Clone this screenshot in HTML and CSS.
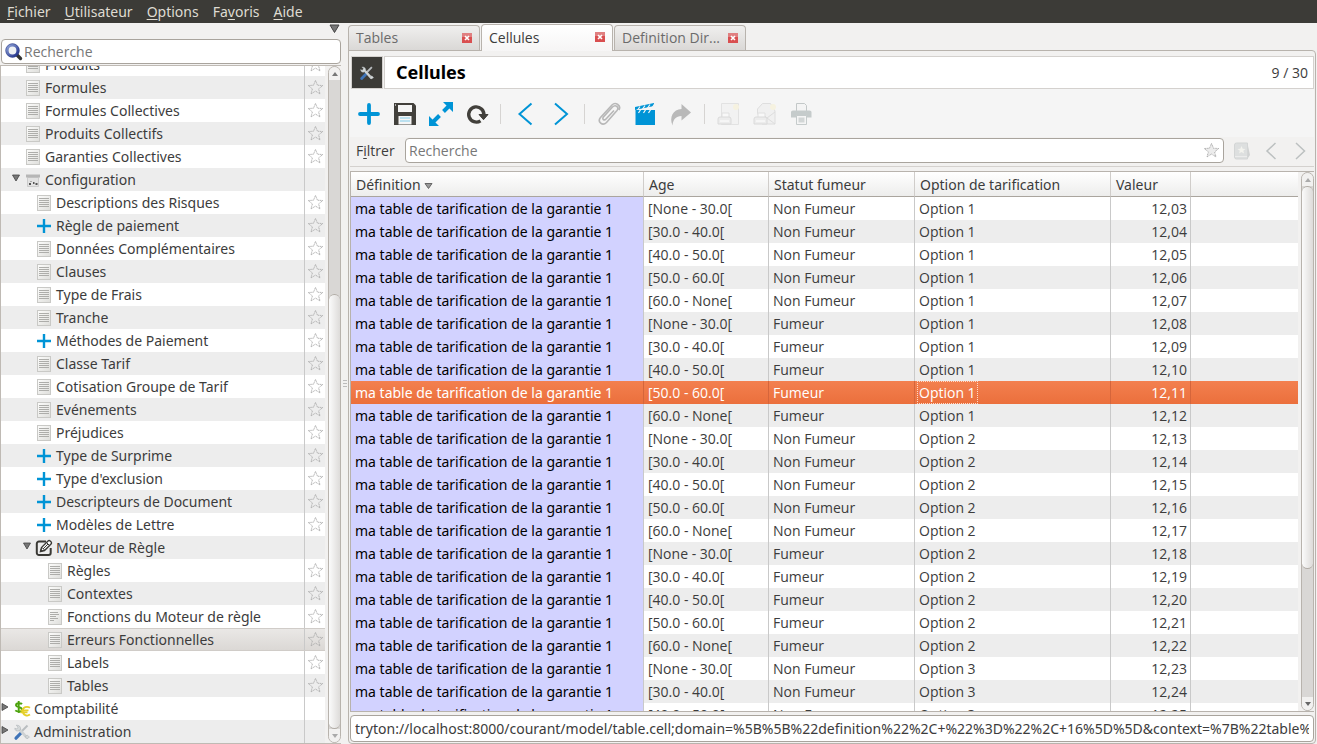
FILE: index.html
```html
<!DOCTYPE html>
<html lang="fr">
<head>
<meta charset="utf-8">
<title>Cellules</title>
<link rel="stylesheet" href="styles.css">
</head>
<body>
<svg class="defs" aria-hidden="true">
  <defs>
    <linearGradient id="paper" x1="0" y1="0" x2="1" y2="1"><stop offset="0" stop-color="#fdfdfc"/><stop offset="1" stop-color="#dededb"/></linearGradient>
    <linearGradient id="lens" x1="0" y1="0" x2="1" y2="1"><stop offset="0" stop-color="#8fa3d8"/><stop offset="1" stop-color="#1f2f8a"/></linearGradient>
    <symbol id="doc" viewBox="0 0 18 18"><rect x="2.500" y="1.500" width="13" height="15" fill="url(#paper)" stroke="#c9c9c6"/><path d="M4 4.500h10M4 6.500h10M4 8.500h10M4 10.500h10M4 12.500h10" stroke="#adadaa"/></symbol>
    <symbol id="doc-left" viewBox="0 0 18 18"><rect x="2.500" y="1.500" width="13" height="15" fill="url(#paper)" stroke="#c9c9c6"/><path d="M4 4.500h8M4 6.500h9M4 8.500h6M4 10.500h8M4 12.500h4" stroke="#adadaa"/></symbol>
    <symbol id="plus" viewBox="0 0 18 18"><path d="M9 2v14M2 9h14" stroke="#0094d6" stroke-width="2.400"/></symbol>
    <symbol id="box" viewBox="0 0 18 18"><path d="M3.500 6.500h11v9h-11z" fill="#e2e2e2" stroke="#ccc"/><path d="M2 3h14v3.500H2z" fill="#b6b6b6"/><path d="M2 3h14v1H2z" fill="#d2d2d2"/><path d="M5 12h2v2H5zM9 11h1.500v2H9zM11.500 12h2v2h-2z" fill="#555"/><path d="M6 10h2v1H6z" fill="#aaa"/></symbol>
    <symbol id="edit" viewBox="0 0 18 18"><path d="M11 2.500H4A2.200 2.200 0 0 0 1.800 4.700v9A2.200 2.200 0 0 0 4 16h9.500a2.200 2.200 0 0 0 2.200-2.200V9" fill="none" stroke="#3a3935" stroke-width="2"/><path d="M5.500 12.500l1-4 6.500-6.500a1.500 1.500 0 0 1 2.200 0l.8.8a1.500 1.500 0 0 1 0 2.200L9.500 11.500z" fill="#fff" stroke="#3a3935" stroke-width="1.400"/><path d="M7 8.500l2.500 2.500M11.500 3.500l3 3M8 10l5-5M5.500 12.500l.5-2 1.500 1.500z" stroke="#3a3935" fill="#3a3935"/></symbol>
    <symbol id="money" viewBox="0 0 18 18"><path d="M9 4.200C8 3 3 2.600 3 5.200c0 2.300 6 1.400 6 4.200 0 3-5 2.600-6.700 1M5.700 1v12" fill="none" stroke="#4ca30d" stroke-width="1.900"/><path d="M17 7.800c-3-2-7.300-.7-7.300 3.200 0 4.200 4.500 5.600 7.300 3.600M7.500 10.300h8M7.500 12.300h7" fill="none" stroke="#e5cf28" stroke-width="1.800"/></symbol>
    <symbol id="tools" viewBox="0 0 18 18"><path d="M14.500 2.500L8 9" stroke="#b9bdc0" stroke-width="2"/><path d="M8.500 9.500l-5.500 5.700" stroke="#3f74b8" stroke-width="3.200" stroke-linecap="round"/><path d="M6 6l7.800 8.500" stroke="#ced2d3" stroke-width="2.600" stroke-linecap="round"/><path d="M3.200 2.200L5 4.200 3.800 6 1.800 5.200c0 2.400 2 3.400 4 2.600L7.500 6.500C8 3.500 6 1.800 3.200 2.200zM12 13.500l2 2.200 2.500-1.500-2-2z" fill="#d5d9da" stroke="#a5aaae" stroke-width=".5"/></symbol>
    <symbol id="star" viewBox="0 0 18 18"><path d="M9 1.500l2.100 5.100 5.600.3-4.400 3.600 1.500 5.300L9 12.800l-4.800 3 1.500-5.300L1.300 6.900l5.600-.3z" fill="none" stroke="#aaa" stroke-width=".9" stroke-dasharray="1.500 .5"/></symbol>
    <symbol id="star-hatched" viewBox="0 0 18 18"><path d="M9 1.500l2.100 5.100 5.600.3-4.400 3.600 1.500 5.300L9 12.800l-4.800 3 1.500-5.300L1.300 6.900l5.600-.3z" fill="#ececec" stroke="#999" stroke-width=".9" stroke-dasharray="1 .7"/></symbol>
    <symbol id="down" viewBox="0 0 8 8"><path d="M.5 1h7L4 7z" fill="#777" stroke="#444" stroke-width=".8"/></symbol>
    <symbol id="right" viewBox="0 0 8 8"><path d="M1 .5v7L7 4z" fill="#777" stroke="#444" stroke-width=".8"/></symbol>
    <symbol id="close" viewBox="0 0 10 10"><path d="M0 0h10v10H0z" fill="#d94f50"/><path d="M0 0h10v4H0z" fill="#e07f80"/><path d="M3 3l4 4M7 3L3 7" stroke="#fff" stroke-width="1.600"/></symbol>
  </defs>
</svg>

<nav class="menubar">
  <button><u>F</u>ichier</button><button><u>U</u>tilisateur</button><button><u>O</u>ptions</button><button>Fa<u>v</u>oris</button><button><u>A</u>ide</button>
</nav>

<div class="workspace">
  <aside class="sidebar">
    <button class="collapse" aria-label="Réduire le menu"><svg width="11" height="9" viewBox="0 0 11 9"><path d="M1 1h9L5.500 8.500z" fill="#777" stroke="#444"/></svg></button>
    <div class="search">
      <svg width="18" height="18" viewBox="0 0 18 18"><path d="M12 12l3.500 3.500" stroke="#333" stroke-width="3.400" stroke-linecap="round"/><circle cx="7.500" cy="7.500" r="5.400" fill="#eef1f4" stroke="url(#lens)" stroke-width="3"/><circle cx="7.500" cy="7.500" r="6.800" fill="none" stroke="#2b3a86" stroke-width=".6"/></svg>
      <input type="text" placeholder="Recherche" aria-label="Recherche dans le menu">
    </div>
    <div class="tree-frame">
      <ul class="tree">
        <li class="l1"><span class="toggle"></span><svg class="ico"><use href="#doc"/></svg><a href="#">Produits</a><button class="fav" aria-label="Favori"><svg><use href="#star"/></svg></button></li>
        <li class="l1"><span class="toggle"></span><svg class="ico"><use href="#doc"/></svg><a href="#">Formules</a><button class="fav" aria-label="Favori"><svg><use href="#star"/></svg></button></li>
        <li class="l1"><span class="toggle"></span><svg class="ico"><use href="#doc"/></svg><a href="#">Formules Collectives</a><button class="fav" aria-label="Favori"><svg><use href="#star"/></svg></button></li>
        <li class="l1"><span class="toggle"></span><svg class="ico"><use href="#doc"/></svg><a href="#">Produits Collectifs</a><button class="fav" aria-label="Favori"><svg><use href="#star"/></svg></button></li>
        <li class="l1"><span class="toggle"></span><svg class="ico"><use href="#doc"/></svg><a href="#">Garanties Collectives</a><button class="fav" aria-label="Favori"><svg><use href="#star"/></svg></button></li>
        <li class="l1"><button class="toggle" aria-label="Replier"><svg><use href="#down"/></svg></button><svg class="ico"><use href="#box"/></svg><a href="#">Configuration</a><span class="fav"></span></li>
        <li class="l2"><span class="toggle"></span><svg class="ico"><use href="#doc"/></svg><a href="#">Descriptions des Risques</a><button class="fav" aria-label="Favori"><svg><use href="#star"/></svg></button></li>
        <li class="l2"><span class="toggle"></span><svg class="ico"><use href="#plus"/></svg><a href="#">Règle de paiement</a><button class="fav" aria-label="Favori"><svg><use href="#star"/></svg></button></li>
        <li class="l2"><span class="toggle"></span><svg class="ico"><use href="#doc"/></svg><a href="#">Données Complémentaires</a><button class="fav" aria-label="Favori"><svg><use href="#star"/></svg></button></li>
        <li class="l2"><span class="toggle"></span><svg class="ico"><use href="#doc"/></svg><a href="#">Clauses</a><button class="fav" aria-label="Favori"><svg><use href="#star"/></svg></button></li>
        <li class="l2"><span class="toggle"></span><svg class="ico"><use href="#doc"/></svg><a href="#">Type de Frais</a><button class="fav" aria-label="Favori"><svg><use href="#star"/></svg></button></li>
        <li class="l2"><span class="toggle"></span><svg class="ico"><use href="#doc"/></svg><a href="#">Tranche</a><button class="fav" aria-label="Favori"><svg><use href="#star"/></svg></button></li>
        <li class="l2"><span class="toggle"></span><svg class="ico"><use href="#plus"/></svg><a href="#">Méthodes de Paiement</a><button class="fav" aria-label="Favori"><svg><use href="#star"/></svg></button></li>
        <li class="l2"><span class="toggle"></span><svg class="ico"><use href="#doc"/></svg><a href="#">Classe Tarif</a><button class="fav" aria-label="Favori"><svg><use href="#star"/></svg></button></li>
        <li class="l2"><span class="toggle"></span><svg class="ico"><use href="#doc"/></svg><a href="#">Cotisation Groupe de Tarif</a><button class="fav" aria-label="Favori"><svg><use href="#star"/></svg></button></li>
        <li class="l2"><span class="toggle"></span><svg class="ico"><use href="#doc"/></svg><a href="#">Evénements</a><button class="fav" aria-label="Favori"><svg><use href="#star"/></svg></button></li>
        <li class="l2"><span class="toggle"></span><svg class="ico"><use href="#doc"/></svg><a href="#">Préjudices</a><button class="fav" aria-label="Favori"><svg><use href="#star"/></svg></button></li>
        <li class="l2"><span class="toggle"></span><svg class="ico"><use href="#plus"/></svg><a href="#">Type de Surprime</a><button class="fav" aria-label="Favori"><svg><use href="#star"/></svg></button></li>
        <li class="l2"><span class="toggle"></span><svg class="ico"><use href="#plus"/></svg><a href="#">Type d'exclusion</a><button class="fav" aria-label="Favori"><svg><use href="#star"/></svg></button></li>
        <li class="l2"><span class="toggle"></span><svg class="ico"><use href="#plus"/></svg><a href="#">Descripteurs de Document</a><button class="fav" aria-label="Favori"><svg><use href="#star"/></svg></button></li>
        <li class="l2"><span class="toggle"></span><svg class="ico"><use href="#plus"/></svg><a href="#">Modèles de Lettre</a><button class="fav" aria-label="Favori"><svg><use href="#star"/></svg></button></li>
        <li class="l2"><button class="toggle" aria-label="Replier"><svg><use href="#down"/></svg></button><svg class="ico"><use href="#edit"/></svg><a href="#">Moteur de Règle</a><span class="fav"></span></li>
        <li class="l3"><span class="toggle"></span><svg class="ico"><use href="#doc"/></svg><a href="#">Règles</a><button class="fav" aria-label="Favori"><svg><use href="#star"/></svg></button></li>
        <li class="l3"><span class="toggle"></span><svg class="ico"><use href="#doc"/></svg><a href="#">Contextes</a><button class="fav" aria-label="Favori"><svg><use href="#star"/></svg></button></li>
        <li class="l3"><span class="toggle"></span><svg class="ico"><use href="#doc-left"/></svg><a href="#">Fonctions du Moteur de règle</a><button class="fav" aria-label="Favori"><svg><use href="#star"/></svg></button></li>
        <li class="l3 current"><span class="toggle"></span><svg class="ico"><use href="#doc"/></svg><a href="#">Erreurs Fonctionnelles</a><button class="fav" aria-label="Favori"><svg><use href="#star"/></svg></button></li>
        <li class="l3"><span class="toggle"></span><svg class="ico"><use href="#doc"/></svg><a href="#">Labels</a><button class="fav" aria-label="Favori"><svg><use href="#star"/></svg></button></li>
        <li class="l3"><span class="toggle"></span><svg class="ico"><use href="#doc"/></svg><a href="#">Tables</a><button class="fav" aria-label="Favori"><svg><use href="#star"/></svg></button></li>
        <li class="l0"><button class="toggle" aria-label="Déplier"><svg><use href="#right"/></svg></button><svg class="ico"><use href="#money"/></svg><a href="#">Comptabilité</a><span class="fav"></span></li>
        <li class="l0"><button class="toggle" aria-label="Déplier"><svg><use href="#right"/></svg></button><svg class="ico"><use href="#tools"/></svg><a href="#">Administration</a><span class="fav"></span></li>
      </ul>
      <div class="scrollbar menu-scroll">
        <button aria-label="Défiler vers le haut"><svg width="6" height="4" viewBox="0 0 6 4"><path d="M0 4h6L3 0z" fill="#777"/></svg></button>
        <div class="track"><div class="thumb"></div></div>
        <button aria-label="Défiler vers le bas"><svg width="6" height="4" viewBox="0 0 6 4"><path d="M0 0h6L3 4z" fill="#aaa"/></svg></button>
      </div>
    </div>
  </aside>

  <div class="splitter"><span></span></div>

  <main class="main">
    <div class="tabs">
      <div class="tab"><button class="name">Tables</button><button class="x" aria-label="Fermer Tables"><svg><use href="#close"/></svg></button></div>
      <div class="tab active"><button class="name">Cellules</button><button class="x" aria-label="Fermer Cellules"><svg><use href="#close"/></svg></button></div>
      <div class="tab"><button class="name">Definition Dir...</button><button class="x" aria-label="Fermer Definition"><svg><use href="#close"/></svg></button></div>
    </div>
    <section class="page">
      <header class="title">
        <button class="title-menu" aria-label="Outils"><svg width="16" height="16"><use href="#tools"/></svg></button>
        <div class="title-box"><h1>Cellules</h1><span>9 / 30</span></div>
      </header>
      <div class="toolbar">
        <button aria-label="Nouveau"><svg viewBox="0 0 24 24"><path d="M12 3v18M3 12h18" stroke="#0094d6" stroke-width="3.800" stroke-linecap="round"/></svg></button>
        <button aria-label="Enregistrer"><svg viewBox="0 0 24 24"><path d="M1 1h19.500L23 3.500V23H1z" fill="#42403b"/><path d="M5 3h14v7H5zM5.500 14h13v8.500h-13z" fill="#f5f5f5"/><path d="M7 16h10M7 19h10" stroke="#82cbea" stroke-width="1.200"/><path d="M2.500 2v2" stroke="#aaa"/></svg></button>
        <button aria-label="Basculer la vue"><svg viewBox="0 0 24 24"><path d="M14 0h10v10zM0 14v10h10z" fill="#0094d6"/><path d="M21 3l-6.500 6.500M10.500 13.500L3 21" stroke="#0094d6" stroke-width="4"/></svg></button>
        <button aria-label="Recharger"><svg viewBox="0 0 24 24"><path d="M15.500 18.800A7.600 7.600 0 1 1 18.900 13" fill="none" stroke="#42403b" stroke-width="3.400"/><path d="M14 12.500h9l-4.500 5.200z" fill="#42403b" stroke="#42403b"/></svg></button>
        <i></i>
        <button aria-label="Précédent"><svg viewBox="0 0 24 24"><path d="M18.500 1.500L6.500 12l12 10.500" fill="none" stroke="#0094d6" stroke-width="2"/></svg></button>
        <button aria-label="Suivant"><svg viewBox="0 0 24 24"><path d="M6 1.500L18 12 6 22.500" fill="none" stroke="#0094d6" stroke-width="2"/></svg></button>
        <i></i>
        <button aria-label="Pièce jointe"><svg viewBox="0 0 24 24"><path d="M17 8.500l-8 8.500c-1.800 2-4.300 0-2.600-2L15.500 5c3-3 7 .3 4.500 3.500L9.500 20.500c-4 4-9.500-.5-6-5L15 3c3.500-3.500 9.500.5 7 5" fill="none" stroke="#b7b7b7" stroke-width="1.600"/></svg></button>
        <button aria-label="Actions"><svg viewBox="0 0 24 24"><path d="M2.500 10h19.500v13H2.500z" fill="#0094d6"/><path d="M2 5l19-4v3L2 8z" fill="#0094d6"/><path d="M4 9l3-4.500M9 8l3-4.500M14 7l3-4.500M19 6l2.500-4" stroke="#f5f5f5" stroke-width="1.200"/><path d="M2.500 8h19.500v2H2.500z" fill="#0094d6"/><path d="M5.500 11l2.500-4M10.500 11l2.500-4M15.500 11l2.500-4" stroke="#f5f5f5" stroke-width="1.200"/></svg></button>
        <button aria-label="Relations"><svg viewBox="0 0 24 24"><path d="M12.500 2l9.500 8.500-9.500 8v-4.500C7 14 4 17.500 3.500 23.500 0 15 4 7.500 12.500 7z" fill="#b9b9b9"/></svg></button>
        <i></i>
        <button aria-label="Rapport"><svg viewBox="0 0 24 24"><path d="M4.500 1.500h17v21h-17z" fill="#f2f2f2" stroke="#e2e2e2"/><path d="M5 11h7v5H5z" fill="#f8f8f8" stroke="#e0e0e0"/><path d="M1 17q0-2 2-2h9q2 0 2 2v5H1z" fill="#ececec" stroke="#dadada"/><path d="M3 19h9" stroke="#fff"/><circle cx="19" cy="5" r="3" fill="#f6f2e0"/></svg></button>
        <button aria-label="Courriel"><svg viewBox="0 0 24 24"><path d="M4.500 11V7l5-5.500h8L22 9v13H9z" fill="#f0f0f0" stroke="#dedede"/><path d="M14 16l8 6M22 10l-8 6-5-5" fill="none" stroke="#ddd"/><path d="M5 11h7v5H5z" fill="#f8f8f8" stroke="#e0e0e0"/><path d="M1 17q0-2 2-2h9q2 0 2 2v5H1z" fill="#ececec" stroke="#dadada"/><path d="M3 19h9" stroke="#fff"/><circle cx="20" cy="5" r="3" fill="#f6f2e0"/></svg></button>
        <button aria-label="Imprimer"><svg viewBox="0 0 24 24"><path d="M7.500 9V1.500h8l2 2V9" fill="#f4f4f4" stroke="#c3c8c8"/><path d="M2 10q0-1.500 2-1.500h16.500q2 0 2 1.500v5.500H2z" fill="#c5cbcb"/><path d="M7.500 13.500h10v9h-10z" fill="#f5f5f5" stroke="#c5cbcb"/><path d="M9.500 15.500h6v5h-6z" fill="#d2d6d6"/></svg></button>
      </div>
      <div class="filter">
        <label for="filter">F<u>i</u>ltrer</label>
        <div class="filter-field"><input id="filter" type="text" placeholder="Recherche"><button aria-label="Favoris"><svg width="17" height="17"><use href="#star-hatched"/></svg></button></div>
        <button class="nav" aria-label="Marque-pages"><svg width="18" height="18" viewBox="0 0 18 18"><path d="M1.500 3q0-2 2-2h11v16h-11q-2 0-2-2z" fill="#dddfdf" stroke="#d3d5d5"/><path d="M15 4l2 9-2 3z" fill="#d0d2d2"/><path d="M2 14.500h12" stroke="#ececec"/><path d="M8.500 4l1.200 2.700 2.800.2-2.200 1.800.8 2.800-2.600-1.600-2.400 1.600.7-2.800L4.500 6.900l2.800-.2z" fill="#f3f3ee"/></svg></button>
        <button class="nav" aria-label="Page précédente"><svg width="18" height="18" viewBox="0 0 18 18"><path d="M13.500 1L5 9l8.500 8" fill="none" stroke="#bcc0c0" stroke-width="1.500"/></svg></button>
        <button class="nav" aria-label="Page suivante"><svg width="18" height="18" viewBox="0 0 18 18"><path d="M5 1l8.500 8L5 17" fill="none" stroke="#bcc0c0" stroke-width="1.500"/></svg></button>
      </div>
      <div class="grid-frame">
        <div class="grid-view">
          <table class="grid">
            <colgroup><col class="c-def"><col class="c-age"><col class="c-smoke"><col class="c-opt"><col class="c-val"><col></colgroup>
            <thead><tr><th>Définition <svg width="9" height="6" viewBox="0 0 9 6"><path d="M1 .5h7L4.500 5.500z" fill="#999" stroke="#666"/></svg></th><th>Age</th><th>Statut fumeur</th><th>Option de tarification</th><th>Valeur</th><th></th></tr></thead>
            <tbody>
              <tr><td>ma table de tarification de la garantie 1</td><td>[None - 30.0[</td><td>Non Fumeur</td><td>Option 1</td><td>12,03</td><td></td></tr>
              <tr><td>ma table de tarification de la garantie 1</td><td>[30.0 - 40.0[</td><td>Non Fumeur</td><td>Option 1</td><td>12,04</td><td></td></tr>
              <tr><td>ma table de tarification de la garantie 1</td><td>[40.0 - 50.0[</td><td>Non Fumeur</td><td>Option 1</td><td>12,05</td><td></td></tr>
              <tr><td>ma table de tarification de la garantie 1</td><td>[50.0 - 60.0[</td><td>Non Fumeur</td><td>Option 1</td><td>12,06</td><td></td></tr>
              <tr><td>ma table de tarification de la garantie 1</td><td>[60.0 - None[</td><td>Non Fumeur</td><td>Option 1</td><td>12,07</td><td></td></tr>
              <tr><td>ma table de tarification de la garantie 1</td><td>[None - 30.0[</td><td>Fumeur</td><td>Option 1</td><td>12,08</td><td></td></tr>
              <tr><td>ma table de tarification de la garantie 1</td><td>[30.0 - 40.0[</td><td>Fumeur</td><td>Option 1</td><td>12,09</td><td></td></tr>
              <tr><td>ma table de tarification de la garantie 1</td><td>[40.0 - 50.0[</td><td>Fumeur</td><td>Option 1</td><td>12,10</td><td></td></tr>
              <tr class="selected"><td>ma table de tarification de la garantie 1</td><td>[50.0 - 60.0[</td><td>Fumeur</td><td><span class="focus">Option 1</span></td><td>12,11</td><td></td></tr>
              <tr><td>ma table de tarification de la garantie 1</td><td>[60.0 - None[</td><td>Fumeur</td><td>Option 1</td><td>12,12</td><td></td></tr>
              <tr><td>ma table de tarification de la garantie 1</td><td>[None - 30.0[</td><td>Non Fumeur</td><td>Option 2</td><td>12,13</td><td></td></tr>
              <tr><td>ma table de tarification de la garantie 1</td><td>[30.0 - 40.0[</td><td>Non Fumeur</td><td>Option 2</td><td>12,14</td><td></td></tr>
              <tr><td>ma table de tarification de la garantie 1</td><td>[40.0 - 50.0[</td><td>Non Fumeur</td><td>Option 2</td><td>12,15</td><td></td></tr>
              <tr><td>ma table de tarification de la garantie 1</td><td>[50.0 - 60.0[</td><td>Non Fumeur</td><td>Option 2</td><td>12,16</td><td></td></tr>
              <tr><td>ma table de tarification de la garantie 1</td><td>[60.0 - None[</td><td>Non Fumeur</td><td>Option 2</td><td>12,17</td><td></td></tr>
              <tr><td>ma table de tarification de la garantie 1</td><td>[None - 30.0[</td><td>Fumeur</td><td>Option 2</td><td>12,18</td><td></td></tr>
              <tr><td>ma table de tarification de la garantie 1</td><td>[30.0 - 40.0[</td><td>Fumeur</td><td>Option 2</td><td>12,19</td><td></td></tr>
              <tr><td>ma table de tarification de la garantie 1</td><td>[40.0 - 50.0[</td><td>Fumeur</td><td>Option 2</td><td>12,20</td><td></td></tr>
              <tr><td>ma table de tarification de la garantie 1</td><td>[50.0 - 60.0[</td><td>Fumeur</td><td>Option 2</td><td>12,21</td><td></td></tr>
              <tr><td>ma table de tarification de la garantie 1</td><td>[60.0 - None[</td><td>Fumeur</td><td>Option 2</td><td>12,22</td><td></td></tr>
              <tr><td>ma table de tarification de la garantie 1</td><td>[None - 30.0[</td><td>Non Fumeur</td><td>Option 3</td><td>12,23</td><td></td></tr>
              <tr><td>ma table de tarification de la garantie 1</td><td>[30.0 - 40.0[</td><td>Non Fumeur</td><td>Option 3</td><td>12,24</td><td></td></tr>
              <tr><td>ma table de tarification de la garantie 1</td><td>[40.0 - 50.0[</td><td>Non Fumeur</td><td>Option 3</td><td>12,25</td><td></td></tr>
            </tbody>
          </table>
        </div>
        <div class="scrollbar grid-scroll">
          <button aria-label="Défiler vers le haut"><svg width="6" height="4" viewBox="0 0 6 4"><path d="M0 4h6L3 0z" fill="#aaa"/></svg></button>
          <div class="track"><div class="thumb"></div></div>
          <button aria-label="Défiler vers le bas"><svg width="6" height="4" viewBox="0 0 6 4"><path d="M0 0h6L3 4z" fill="#666"/></svg></button>
        </div>
      </div>
      <input class="url" type="text" readonly aria-label="Adresse" value="tryton://localhost:8000/courant/model/table.cell;domain=%5B%5B%22definition%22%2C+%22%3D%22%2C+16%5D%5D&amp;context=%7B%22table%22%3A+16%7D">
    </section>
  </main>
</div>
</body>
</html>
```

FILE: styles.css
```css
* { box-sizing: border-box; }
body {
  margin: 0;
  height: 100vh;
  display: flex;
  flex-direction: column;
  overflow: hidden;
  background: #f2f1f0;
  color: #3c3c3c;
  font: 14px/23px "Open Sans", "Noto Sans", sans-serif;
}
button {
  margin: 0;
  padding: 0;
  border: 0;
  background: none;
  color: inherit;
  font: inherit;
}
button svg { display: block; }
input { font: inherit; color: #3c3c3c; min-width: 0; }
input::placeholder { color: #777; opacity: 1; }
a { color: inherit; text-decoration: none; }
u { text-underline-offset: 2px; }
.defs { position: absolute; width: 0; height: 0; }
.menubar, .tree, .grid th, .url, .grid tbody td:first-child { font-family: "Noto Sans", "Open Sans", sans-serif; }

.menubar {
  flex: none;
  display: flex;
  gap: 14px;
  height: 23px;
  padding: 0 7px;
  background: #3c3b37;
  color: #dfdbd2;
}
.workspace { flex: 1; min-height: 0; display: flex; }

/* Menu pane */
.sidebar { flex: none; width: 341px; display: flex; flex-direction: column; }
.collapse { align-self: flex-end; height: 16px; padding: 1px 1px 6px; }
.search {
  display: flex;
  align-items: center;
  gap: 1px;
  height: 25px;
  padding: 0 3px;
  margin-left: 1px;
  border: 1px solid #a9a49d;
  border-radius: 4px;
  background: #fff;
}
.search input { flex: 1; border: 0; padding: 0; height: 21px; background: none; }
.tree-frame {
  flex: 1;
  min-height: 0;
  display: flex;
  justify-content: space-between;
  margin-top: 1px;
  border: 1px solid #bfbab4;
  border-right: 0;
  overflow: hidden;
}
.tree { flex: 1; list-style: none; margin: -13px 3px 0 0; padding: 0; }
.tree li { display: flex; align-items: center; height: 23px; background: #fff; }
.tree li:nth-child(even) { background: #ededed; }
.tree .l1 { padding-left: 11px; }
.tree .l2 { padding-left: 22px; }
.tree .l3 { padding-left: 33px; }
.tree li.current {
  background: linear-gradient(#eae8e6, #dbd8d5);
  border-top: 1px solid #d0ccc8;
  border-bottom: 1px solid #d0ccc8;
}
.toggle { flex: none; width: 12px; padding-bottom: 3px; }
.toggle svg { width: 8px; height: 8px; }
.ico { flex: none; width: 18px; height: 18px; margin-right: 3px; }
.tree a { flex: 1; white-space: nowrap; }
.fav {
  flex: none;
  align-self: stretch;
  display: flex;
  align-items: center;
  justify-content: center;
  width: 21px;
  border-left: 1px solid #c9c9c9;
}
.fav svg { width: 17px; height: 17px; }

/* Scrollbars */
.scrollbar {
  flex: none;
  width: 13px;
  display: flex;
  flex-direction: column;
  border: 1px solid #b8b3ad;
  border-radius: 7px;
  background: #d9d7d5;
  overflow: hidden;
}
.scrollbar > button {
  flex: none;
  display: flex;
  align-items: center;
  justify-content: center;
  height: 13px;
  background: #f2f1f0;
}
.track { flex: 1; display: flex; flex-direction: column; }
.thumb {
  border: 1px solid #b1aca6;
  border-width: 1px 0;
  border-radius: 7px;
  background: linear-gradient(90deg, #fbfbfb, #dddbd9);
}
.menu-scroll .track { justify-content: flex-end; }
.menu-scroll .thumb { height: 67%; }
.grid-scroll .thumb { height: 75%; }
.splitter { flex: none; width: 7px; display: flex; align-items: center; justify-content: center; }
.splitter span { width: 4px; height: 7px; background: repeating-linear-gradient(#bbb 0 1px, #f2f1f0 1px 3px); }

/* Notebook */
.main { flex: 1; min-width: 0; display: flex; flex-direction: column; padding: 1px 1px 0 0; }
.tabs { flex: none; display: flex; align-items: flex-end; gap: 1px; height: 27px; }
.tab {
  display: flex;
  align-items: center;
  width: 132px;
  height: 26px;
  padding: 0 7px 2px;
  border: 1px solid #b8b3ad;
  border-bottom: 0;
  border-radius: 4px 4px 0 0;
  background: linear-gradient(#f0efee, #d9d7d5);
  color: #6b6b6b;
}
.tab.active { z-index: 1; height: 27px; background: linear-gradient(#fff, #f6f5f5); color: #3c3c3c; }
.tab .name { flex: 1; min-width: 0; text-align: left; white-space: nowrap; }
.tab .x svg { width: 10px; height: 10px; }
.page {
  flex: 1;
  min-height: 0;
  display: flex;
  flex-direction: column;
  margin-top: -1px;
  padding: 5px 1px 1px;
  border: 1px solid #b8b3ad;
  border-radius: 0 4px 4px 4px;
}
.title { flex: none; display: flex; gap: 1px; height: 33px; padding-left: 1px; }
.title-menu {
  display: flex;
  align-items: center;
  justify-content: center;
  width: 32px;
  background: #3c3b37;
  border: 1px solid #d4d1ce;
}
.title-box {
  flex: 1;
  display: flex;
  align-items: center;
  justify-content: space-between;
  padding: 0 5px 0 11px;
  border: 1px solid #d4d1ce;
  background: #fff;
}
.title-box h1 { margin: 0; font-family: "Noto Sans", sans-serif; font-size: 18px; color: #000; }
.toolbar { flex: none; display: flex; align-items: center; height: 48px; padding: 2px 0 0 1px; background: #f5f5f5; }
.toolbar button { width: 36px; padding: 0 6px; }
.toolbar svg { width: 24px; height: 24px; }
.toolbar i { width: 1px; height: 20px; margin: 0 6px 0 5px; background: #d6d4d2; }
.filter {
  flex: none;
  display: flex;
  align-items: center;
  height: 30px;
  padding: 0 0 2px 6px;
  border-bottom: 1px solid #d4d1ce;
}
.filter label { width: 49px; }
.filter-field {
  flex: 1;
  display: flex;
  align-items: center;
  height: 25px;
  margin-right: 3px;
  padding: 0 3px;
  border: 1px solid #a9a49d;
  border-radius: 4px;
  background: #fff;
}
.filter-field input { flex: 1; padding: 0; border: 0; height: 21px; background: none; }
.nav { width: 29px; display: flex; justify-content: center; }

/* Records */
.grid-frame {
  flex: 1;
  min-height: 0;
  display: flex;
  gap: 3px;
  margin-top: 4px;
  border: 1px solid #b8b3ad;
  border-width: 1px 0 1px 1px;
}
.grid-view { flex: 1; min-width: 0; overflow: hidden; }
.grid { width: 100%; table-layout: fixed; border-collapse: separate; border-spacing: 0; }
.c-def { width: 293px; }
.c-age { width: 125px; }
.c-smoke { width: 146px; }
.c-opt { width: 196px; }
.c-val { width: 80px; }
.grid th {
  height: 25px;
  padding: 0 5px;
  border-right: 1px solid #d0cdca;
  border-bottom: 1px solid #aaa59e;
  background: linear-gradient(#fff, #ededec);
  font-weight: 400;
  text-align: left;
}
.grid th svg { vertical-align: 1px; }
.grid td { height: 23px; padding: 0 4px; border-right: 1px solid #c9c9c9; white-space: nowrap; background: #fff; }
.grid th:last-child, .grid td:last-child { border-right: 0; }
.grid tr:nth-child(even) td { background: #ededed; }
.grid td:nth-child(5) { padding-right: 3px; text-align: right; }
.grid tbody td:first-child { background: #d2d2ff; color: #000; }
.grid tbody .selected td, .grid tbody .selected td:first-child {
  background: linear-gradient(#f3804f, #eb6f3c);
  border-right-color: #d5653b;
  color: #fff;
}
.focus { outline: 1px dotted #ffd9c8; outline-offset: 1px; }
.url {
  flex: none;
  height: 27px;
  margin-top: 3px;
  padding: 0 4px;
  border: 1px solid #a9a49d;
  border-radius: 4px;
  background: #fff;
}
```
